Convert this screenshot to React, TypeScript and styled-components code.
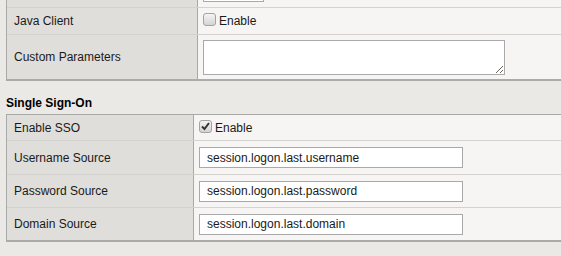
import * as React from "react"
import styled, { createGlobalStyle } from "styled-components"

const GlobalStyle = createGlobalStyle`
    html, body {
        margin: 0;
        padding: 0;
        background: #eae9e5;
        font-family: "Liberation Sans", Arial, sans-serif;
        font-size: 12px;
        color: #1a1a1a;
    }
`

const Page = styled.div`
    width: 561px;
    height: 256px;
    overflow: hidden;
    padding-left: 6px;
    box-sizing: border-box;
`

const Table = styled.div<{ $open?: boolean }>`
    width: 600px;
    border-left: 1px solid #a9a9a7;
    border-bottom: 2px solid #ababa9;
    border-top: ${(p) => (p.$open ? "none" : "1px solid #a9a9a7")};
`

const Row = styled.div<{ $label: number; $height: number; $first?: boolean }>`
    display: grid;
    grid-template-columns: ${(p) => p.$label}px 1fr;
    height: ${(p) => p.$height}px;
    box-sizing: border-box;
    border-top: ${(p) => (p.$first ? "none" : "1px solid #d3d2cf")};
`

const Label = styled.div`
    display: flex;
    align-items: center;
    padding-left: 7px;
    background: #dfdedb;
    border-right: 1px solid #a9a9a7;
`

const Value = styled.div<{ $top?: boolean }>`
    display: flex;
    align-items: ${(p) => (p.$top ? "flex-start" : "center")};
    padding-left: 5px;
    background: #f6f5f3;
`

const CutInput = styled.div`
    width: 59px;
    height: 1px;
    background: #fff;
    border: 1px solid #a9a9a9;
    border-top: none;
`

const Check = styled.span`
    display: inline-flex;
    align-items: center;
    justify-content: center;
    width: 13px;
    height: 13px;
    box-sizing: border-box;
    border: 1px solid #a3a3a3;
    border-radius: 3px;
    background: linear-gradient(#f4f4f4, #d4d4d4);
    margin: 0 3px 3px 0;
`

const CheckLabel = styled.label`
    display: inline-flex;
    align-items: center;
    font-size: 12px;
`

const TextBox = styled.input`
    all: unset;
    box-sizing: border-box;
    width: 264px;
    height: 21px;
    padding: 0 7px;
    background: #fff;
    border: 1px solid #a9a9a9;
    font-family: "Liberation Sans", Arial, sans-serif;
    font-size: 12px;
    color: #1a1a1a;
`

const Area = styled.textarea`
    box-sizing: border-box;
    width: 302px;
    height: 35px;
    margin: 5px 0 0 0;
    background: #fff;
    border: 1px solid #a9a9a9;
    border-radius: 0;
    outline: none;
`

const Heading = styled.div`
    height: 33px;
    box-sizing: border-box;
    padding-top: 15px;
    line-height: 14px;
    font-weight: bold;
    font-size: 12px;
    color: #000;
`

const Tick = () => (
    <svg width="9" height="9" viewBox="0 0 9 9">
        <path d="M1 4.5 L3.5 7 L8 1" fill="none" stroke="#333" strokeWidth="2" />
    </svg>
)

const Checkbox = ({ checked }: { checked?: boolean }) => (
    <CheckLabel>
        <Check>{checked && <Tick />}</Check>
        Enable
    </CheckLabel>
)

const sso = [
    { label: "Username Source", value: "session.logon.last.username", height: 34 },
    { label: "Password Source", value: "session.logon.last.password", height: 33 },
    { label: "Domain Source", value: "session.logon.last.domain", height: 33 },
]

export default function App() {
    return (
        <Page>
            <GlobalStyle />
            <Table $open>
                <Row $label={191} $height={7} $first>
                    <Label />
                    <Value $top>
                        <CutInput />
                    </Value>
                </Row>
                <Row $label={191} $height={27}>
                    <Label>Java Client</Label>
                    <Value>
                        <Checkbox />
                    </Value>
                </Row>
                <Row $label={191} $height={45}>
                    <Label>Custom Parameters</Label>
                    <Value $top>
                        <Area />
                    </Value>
                </Row>
            </Table>
            <Heading>Single Sign-On</Heading>
            <Table>
                <Row $label={187} $height={25} $first>
                    <Label>Enable SSO</Label>
                    <Value>
                        <Checkbox checked />
                    </Value>
                </Row>
                {sso.map((r) => (
                    <Row key={r.label} $label={187} $height={r.height}>
                        <Label>{r.label}</Label>
                        <Value>
                            <TextBox defaultValue={r.value} />
                        </Value>
                    </Row>
                ))}
            </Table>
        </Page>
    )
}
